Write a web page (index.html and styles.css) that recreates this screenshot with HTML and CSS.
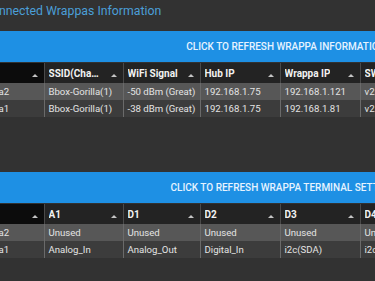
FILE: index.html
```html
<!DOCTYPE html>
<html lang="en">
<head>
    <meta charset="UTF-8">
    <meta name="viewport" content="width=device-width, initial-scale=1.0">
    <title>Wrappa Hub</title>
    <link rel="stylesheet" href="styles.css">
</head>
<body>
    <div class="page">
        <section class="panel">
            <h2 class="panel-title">Connected Wrappas Information</h2>
            <button class="refresh-btn">Click to refresh Wrappa Information</button>
            <table class="grid">
                <colgroup>
                    <col class="c-name"><col class="c-a"><col class="c-b"><col class="c-c"><col class="c-d"><col class="c-e">
                </colgroup>
                <thead>
                    <tr>
                        <th class="sorted"><span class="th-label">Name</span><span class="sort"></span></th>
                        <th><span class="th-label">SSID(Channel)</span><span class="sort"></span></th>
                        <th><span class="th-label">WiFi Signal</span><span class="sort"></span></th>
                        <th><span class="th-label">Hub IP</span><span class="sort"></span></th>
                        <th><span class="th-label">Wrappa IP</span><span class="sort"></span></th>
                        <th><span class="th-label">SW Version</span><span class="sort"></span></th>
                    </tr>
                </thead>
                <tbody>
                    <tr class="odd">
                        <td>Wrappa2</td><td>Bbox-Gorilla(1)</td><td>-50 dBm (Great)</td><td>192.168.1.75</td><td>192.168.1.121</td><td>v2.1.4</td>
                    </tr>
                    <tr class="even">
                        <td>Wrappa1</td><td>Bbox-Gorilla(1)</td><td>-38 dBm (Great)</td><td>192.168.1.75</td><td>192.168.1.81</td><td>v2.1.4</td>
                    </tr>
                </tbody>
            </table>
        </section>

        <section class="panel panel-terminals">
            <button class="refresh-btn">Click to refresh Wrappa Terminal Settings</button>
            <table class="grid">
                <colgroup>
                    <col class="c-name"><col class="c-a"><col class="c-b"><col class="c-c"><col class="c-d"><col class="c-e">
                </colgroup>
                <thead>
                    <tr>
                        <th class="sorted"><span class="th-label">Name</span><span class="sort"></span></th>
                        <th><span class="th-label">A1</span><span class="sort"></span></th>
                        <th><span class="th-label">D1</span><span class="sort"></span></th>
                        <th><span class="th-label">D2</span><span class="sort"></span></th>
                        <th><span class="th-label">D3</span><span class="sort"></span></th>
                        <th><span class="th-label">D4</span><span class="sort"></span></th>
                    </tr>
                </thead>
                <tbody>
                    <tr class="odd">
                        <td>Wrappa2</td><td>Unused</td><td>Unused</td><td>Unused</td><td>Unused</td><td>Unused</td>
                    </tr>
                    <tr class="even">
                        <td>Wrappa1</td><td>Analog_In</td><td>Analog_Out</td><td>Digital_In</td><td>i2c(SDA)</td><td>i2c(SCL)</td>
                    </tr>
                </tbody>
            </table>
        </section>
    </div>
</body>
</html>
```

FILE: styles.css
```css
body {
    margin: 0;
    background-color: #323232;
    font-family: Roboto, "Liberation Sans", Arial, sans-serif;
    overflow: hidden;
}

.page {
    width: 644px;
    margin-left: -36px;
}

.panel-title {
    margin: 0;
    padding: 3px 0 12px 20px;
    font-size: 12.3px;
    line-height: 16px;
    font-weight: 400;
    color: #4b9fd8;
}

.refresh-btn {
    display: block;
    width: 100%;
    height: 31px;
    border: none;
    background-color: #1e90e4;
    color: #e6f3ff;
    font-family: inherit;
    font-size: 10px;
    font-weight: 500;
    text-transform: uppercase;
    cursor: pointer;
}

.panel-terminals {
    margin-top: 55px;
}

.grid {
    border-collapse: collapse;
    table-layout: fixed;
    width: 476px;
    margin-top: 1px;
}

.c-name { width: 80px; }
.c-a { width: 79px; }
.c-b { width: 77px; }
.c-c { width: 80px; }
.c-d { width: 80px; }
.c-e { width: 80px; }

.grid th,
.grid td {
    padding: 0 4px;
    border-right: 1px solid #6a6a6a;
    white-space: nowrap;
    overflow: hidden;
    text-align: left;
}

.grid th {
    height: 20px;
    background-color: #232323;
    color: #f2f2f2;
    font-size: 10px;
    font-weight: 700;
    border-right-color: #4a4a4a;
}

.grid th.sorted {
    background-color: #0c0c0c;
}

.grid th > .th-label {
    display: inline-block;
    max-width: 52px;
    overflow: hidden;
    text-overflow: ellipsis;
    vertical-align: middle;
}

.sort {
    float: right;
    margin: 7px 2px 0 0;
    width: 0;
    height: 0;
    border-left: 3px solid transparent;
    border-right: 3px solid transparent;
    border-bottom: 3px solid #c4c4c4;
}

.grid td {
    height: 17px;
    color: #e4e4e4;
    font-size: 9.6px;
}

.grid td:first-child {
    padding-left: 7px;
}

.grid tr.odd td {
    background-color: #575757;
}

.grid tr.even td {
    background-color: #3c3c3c;
}
```
